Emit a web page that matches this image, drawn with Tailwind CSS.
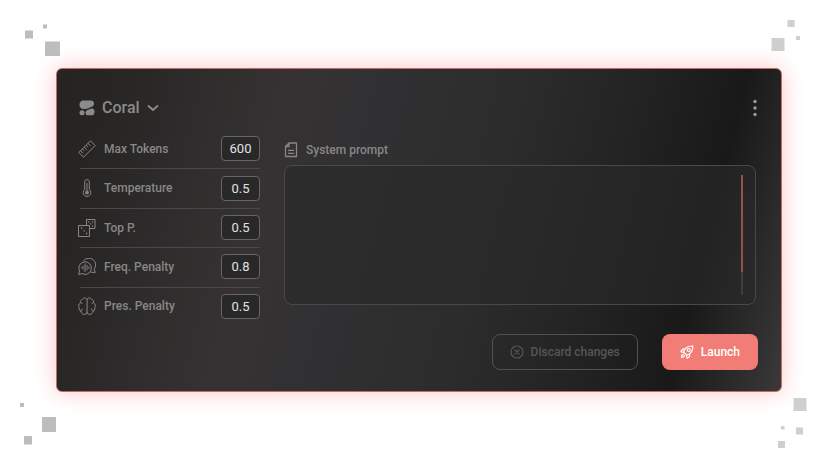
<!DOCTYPE html>
<html lang="en">
<head>
<meta charset="utf-8">
<meta name="viewport" content="width=device-width, initial-scale=1">
<title>Coral settings</title>
<script src="https://cdn.jsdelivr.net/npm/@tailwindcss/browser@4"></script>
</head>
<body class="bg-white">
<main class="relative min-h-screen pt-[68px] pr-11 pb-[75px] pl-14 font-[Roboto,'Liberation_Sans',sans-serif] text-xs font-medium text-[#888787]">
  <!-- Corner pixels -->
  <svg class="absolute top-0 left-0" width="70" height="64" fill="#bdbdbd" aria-hidden="true"><rect x="25" y="30.5" width="8" height="8"/><rect x="43" y="24.500" width="4" height="4"/><rect x="45" y="41.500" width="15" height="14.500"/></svg>
  <svg class="absolute top-0 right-0" width="66" height="64" fill="#cfcfcf" aria-hidden="true"><rect x="27.500" y="20" width="7" height="7"/><rect x="36" y="36" width="4" height="4"/><rect x="11.500" y="38" width="13" height="13"/></svg>
  <svg class="absolute bottom-0 left-0" width="70" height="68" fill="#bdbdbd" aria-hidden="true"><rect x="20" y="3" width="4" height="4"/><rect x="42" y="17" width="14" height="15"/><rect x="24" y="36" width="8" height="8.500"/></svg>
  <svg class="absolute right-0 bottom-0" width="66" height="78" fill="#cfcfcf" aria-hidden="true"><rect x="33.500" y="8" width="13" height="13"/><rect x="21" y="36" width="3.500" height="3.500"/><rect x="36" y="37.500" width="7" height="7"/><rect x="18" y="51" width="7" height="7"/></svg>

  <section class="rounded-md border border-[#c06c69] bg-[linear-gradient(104deg,#262322_0%,#282726_10%,#363233_29%,#303032_42%,#2c2c2c_58%,#242425_72%,#19191a_86%,#2b2b2b_94%,#3b393a_100%)] pt-[27px] pr-[23px] pb-[21px] pl-[21px] shadow-[0_0_22px_rgba(255,70,70,0.32)]">
    <header class="flex h-6 items-center justify-between pl-px pr-px">
      <button type="button" class="flex items-center gap-[7px] text-base text-[#8c8b8b]">
        <svg width="16" height="16" viewBox="0 0 16 16" fill="currentColor" aria-hidden="true"><path d="M4.500.5h7C14 .5 15 1.700 15 3.500c0 2-1 2.800-3 3.600L9.400 8.300c-1.200.5-2.300.8-4 .8H4.300C2 9.100.5 7.300.5 4.800S2 .5 4.500.5Z"/><path d="M10 9.400 12 8.700c2-.7 3.500.5 3.500 3s-1.200 3.600-3.200 3.600H9.400c-2 0-2.900-1-2.900-2.600 0-1.700 1-2.500 3.500-3.300Z"/><circle cx="3" cy="12.700" r="2.500"/></svg>
        Coral
        <svg width="12" height="12" viewBox="0 0 12 12" fill="none" stroke="currentColor" stroke-width="1.800" stroke-linecap="round" stroke-linejoin="round" aria-hidden="true"><path d="m1.500 4 4.500 4 4.500-4"/></svg>
      </button>
      <button type="button" aria-label="More options" class="text-[#9a9a9a]">
        <svg width="4" height="18" viewBox="0 0 4 18" fill="currentColor" aria-hidden="true"><circle cx="2" cy="2.500" r="1.700"/><circle cx="2" cy="9" r="1.700"/><circle cx="2" cy="15.500" r="1.700"/></svg>
      </button>
    </header>

    <div class="mt-2 flex gap-6">
      <div class="flex h-[198px] w-[182px] shrink-0 flex-col pt-px">
        <div class="flex flex-1 items-center gap-2">
          <svg width="18" height="18" viewBox="0 0 18 18" fill="none" stroke="currentColor" aria-hidden="true"><path d="M12.500.8 17.200 5.500 5.500 17.200.8 12.500ZM10 3.300l2.600 2.600M8 5.300l1.800 1.800M6.200 7.100l2.600 2.600M4.400 8.900l1.800 1.800M2.600 10.700l2.600 2.600"/></svg>
          <label for="tokens" class="flex-1">Max Tokens</label>
          <input id="tokens" value="600" class="h-[25px] w-[39px] rounded border border-[#666465] bg-[#292829] text-center text-[13px] font-normal text-[#e2e2e2]">
        </div>
        <div class="flex flex-1 items-center gap-2 bg-[linear-gradient(#4a4849,#4a4849)] bg-[length:180px_1px] bg-right-top bg-no-repeat">
          <svg width="18" height="18" viewBox="0 0 18 18" fill="none" stroke="currentColor" aria-hidden="true"><path d="M6.700 10.600V2.900a2.300 2.300 0 0 1 4.600 0v7.700a3.800 3.800 0 1 1-4.600 0Z"/><path d="M9 4v8"/><circle cx="9" cy="13.500" r="1.500" fill="currentColor"/></svg>
          <label for="temp" class="flex-1">Temperature</label>
          <input id="temp" value="0.5" class="h-[25px] w-[39px] rounded border border-[#666465] bg-[#292829] text-center text-[13px] font-normal text-[#e2e2e2]">
        </div>
        <div class="flex flex-1 items-center gap-2 bg-[linear-gradient(#4a4849,#4a4849)] bg-[length:180px_1px] bg-right-top bg-no-repeat">
          <svg width="18" height="18" viewBox="0 0 18 18" fill="none" stroke="currentColor" aria-hidden="true"><path d="M.5 6.500h11v11H.5ZM8.500 6.500v-6h8.500V9.500h-5.500"/><path d="M3 9h1.300M5.500 11.800h1.300M8 14.500h1.300M10.300 2.800h1.200M14 2.800h1.200M12.200 4.900h1.200M14 7.200h1.200" stroke-width="1.300"/></svg>
          <label for="topp" class="flex-1">Top P.</label>
          <input id="topp" value="0.5" class="h-[25px] w-[39px] rounded border border-[#666465] bg-[#292829] text-center text-[13px] font-normal text-[#e2e2e2]">
        </div>
        <div class="flex flex-1 items-center gap-2 bg-[linear-gradient(#4a4849,#4a4849)] bg-[length:180px_1px] bg-right-top bg-no-repeat">
          <svg width="18" height="18" viewBox="0 0 18 18" fill="none" stroke="currentColor" stroke-linejoin="round" aria-hidden="true"><path d="M.6 16.500 1.500 13A6.300 6.300 0 1 1 4 15.600Z"/><path d="M5.500 2.800a6.200 6.200 0 0 1 10.700 8.400l1.200 3.200-4.600-.1"/><path d="M3 9.700h1M5 7.800v3.800M7 5.500v8.400M9 7v5.200M11 8.500v2.300"/></svg>
          <label for="freq" class="flex-1">Freq. Penalty</label>
          <input id="freq" value="0.8" class="h-[25px] w-[39px] rounded border border-[#666465] bg-[#292829] text-center text-[13px] font-normal text-[#e2e2e2]">
        </div>
        <div class="flex flex-1 items-center gap-2 bg-[linear-gradient(#4a4849,#4a4849)] bg-[length:180px_1px] bg-right-top bg-no-repeat">
          <svg width="18" height="18" viewBox="0 0 18 18" fill="none" stroke="currentColor" stroke-linejoin="round" stroke-linecap="round" aria-hidden="true"><path d="M9 2.500C8.500.5 5.500.2 4.700 2.300 2.900 2.600 2 4.200 2.500 5.700.6 7 .2 9.200 1.200 10.700c-.4 1.800.4 3 1.800 3.500.2 2 1.500 3 3.200 3.200C7.700 17.500 9 16.800 9 15ZM9 2.500c.5-2 3.500-2.300 4.300-.2 1.800.3 2.700 1.900 2.200 3.400 1.900 1.300 2.300 3.500 1.300 5 .4 1.800-.4 3-1.800 3.500-.2 2-1.500 3-3.200 3.200C10.300 17.500 9 16.800 9 15"/><path d="M2.500 5.700 4 6.300M3 14.200c0-1.200.6-1.800 1.700-2M15.500 5.700 14 6.300M15 14.200c0-1.200-.6-1.800-1.700-2"/></svg>
          <label for="pres" class="flex-1">Pres. Penalty</label>
          <input id="pres" value="0.5" class="h-[25px] w-[39px] rounded border border-[#666465] bg-[#292829] text-center text-[13px] font-normal text-[#e2e2e2]">
        </div>
      </div>

      <div class="min-w-0 flex-1 pt-[14px] pr-0.5">
        <label for="prompt" class="flex h-4 items-center gap-2">
          <svg width="14" height="16" viewBox="0 0 14 16" fill="none" stroke="currentColor" stroke-width="1.300" stroke-linejoin="round" aria-hidden="true"><path d="M5 1h7.500v13.500h-11V4.500ZM5 1v3.500H1.500M4 8.300h6M4 11.300h6"/></svg>
          System prompt
        </label>
        <div class="relative mt-[7px]">
          <textarea id="prompt" class="block h-[140px] w-full resize-none rounded-lg border border-[#4a4949] bg-[#292929]/60 p-3 text-[#e2e2e2]"></textarea>
          <div class="absolute top-[10px] right-[13px] h-[120px] w-[2px] bg-[#3e3e3e]" aria-hidden="true"><div class="h-[97px] bg-[#98504d]"></div></div>
        </div>
      </div>
    </div>

    <footer class="mt-2 flex justify-end gap-6">
      <button type="button" class="flex h-9 items-center gap-[7px] rounded-lg border border-[#515151] px-[17px] text-[#565656]">
        <svg width="14" height="14" viewBox="0 0 14 14" fill="none" stroke="currentColor" stroke-width="1.200" stroke-linecap="round" aria-hidden="true"><circle cx="7" cy="7" r="6"/><path d="m5 5 4 4M9 5 5 9"/></svg>
        Discard changes
      </button>
      <button type="button" class="flex h-9 items-center gap-[7px] rounded-lg bg-[#f27c76] px-[18px] text-white">
        <svg width="14" height="14" viewBox="0 0 14 14" fill="none" stroke="currentColor" stroke-width="1.200" stroke-linejoin="round" stroke-linecap="round" aria-hidden="true"><path d="M3.500 7C4.500 3.500 7.500.8 12.800 1 13 6.500 10.500 9 7 10.300ZM5 4.200C3.500 3.500 1.800 4.500 1 6.800l2.500.7M9.500 9.500c.7 1.500-.3 3-2.500 3.700l-.5-2.700M3.200 9.300c-1.500.4-1.800 1.700-1.700 3 1.300.1 2.600-.3 3-1.800"/><circle cx="8.700" cy="5" r="1.500"/></svg>
        Launch
      </button>
    </footer>
  </section>
</main>
</body>
</html>
